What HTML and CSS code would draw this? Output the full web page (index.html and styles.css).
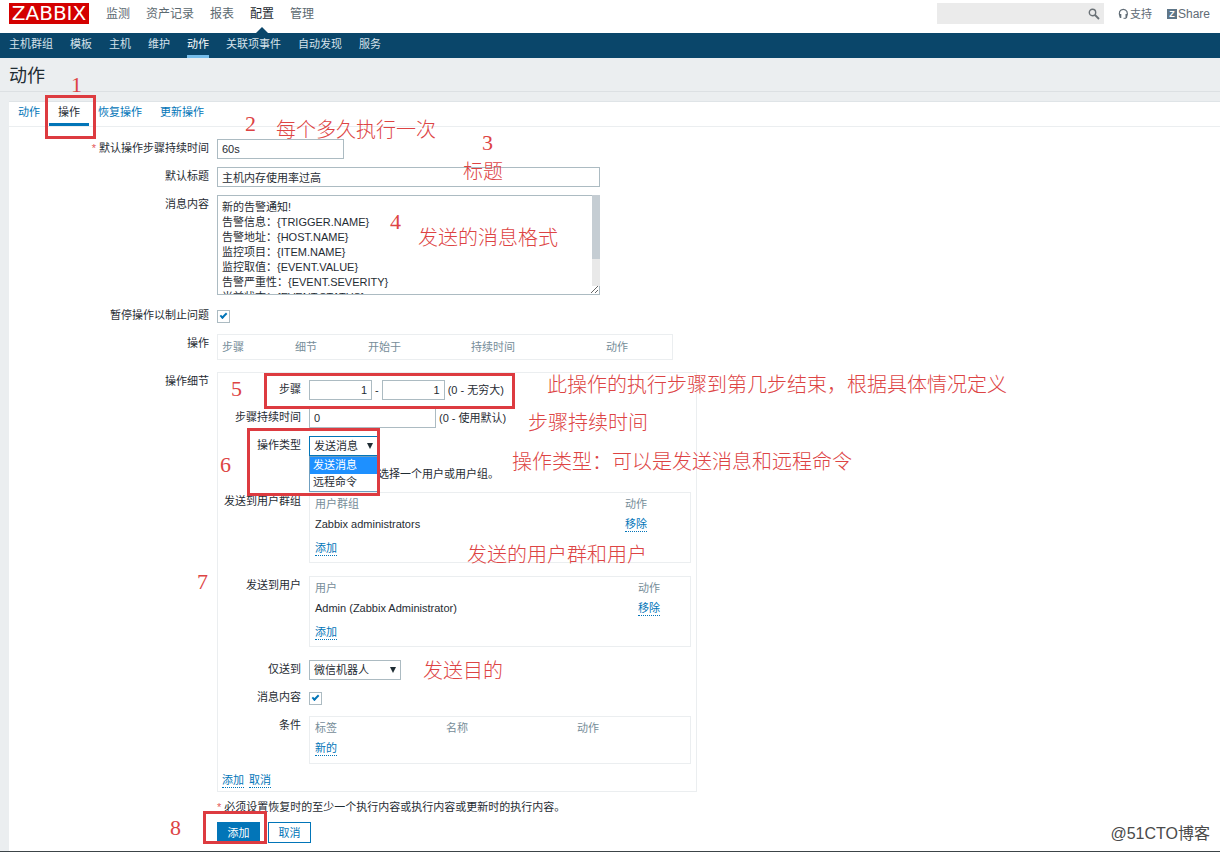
FILE: index.html
```html
<!DOCTYPE html>
<html lang="zh-CN">
<head>
  <meta charset="UTF-8" />
  <meta name="viewport" content="width=device-width, initial-scale=1.0" />
  <title>动作</title>
  <link rel="stylesheet" href="styles.css">
</head>
<body>

  <header class="top">
    <a class="logo" href="#">ZABBIX</a>
    <nav class="menu">
      <a href="#">监测</a>
      <a href="#">资产记录</a>
      <a href="#">报表</a>
      <a href="#" class="selected">配置</a>
      <a href="#">管理</a>
    </nav>
    <div class="search">
      <input type="text" aria-label="搜索" />
      <button type="button" aria-label="搜索">
        <svg width="12" height="12" viewBox="0 0 12 12" fill="none" stroke="#6a7176">
          <circle cx="4.5" cy="4.5" r="3.2" stroke-width="1.4" />
          <path d="M7 7l4 4" stroke-width="1.8" />
        </svg>
      </button>
    </div>
    <a class="tool support" href="#">
      <svg width="11" height="12" viewBox="0 0 11 12" fill="none" stroke="#5f6b75">
        <path d="M2.2 8.6C.2 5 1.8 1.3 5.3 1.3S10.4 5 8.6 8.6" stroke-width="1.2" />
        <path d="M2.5 6v4M8.3 6v4" stroke-width="1.6" />
        <path d="M8.3 10.3H5.5" stroke-width="1" />
      </svg>
      支持
    </a>
    <a class="tool" href="#"><span class="z-mark">Z</span>Share</a>
  </header>

  <nav class="submenu">
    <a href="#">主机群组</a>
    <a href="#">模板</a>
    <a href="#">主机</a>
    <a href="#">维护</a>
    <a href="#" class="selected">动作</a>
    <a href="#">关联项事件</a>
    <a href="#">自动发现</a>
    <a href="#">服务</a>
  </nav>

  <h1>动作</h1>

  <main>
    <div class="tabs">
      <a href="#">动作</a>
      <a href="#" class="selected">操作</a>
      <a href="#">恢复操作</a>
      <a href="#">更新操作</a>
    </div>

    <form>
      <div class="row">
        <label class="required" for="period">默认操作步骤持续时间</label>
        <input type="text" id="period" class="medium" value="60s" />
      </div>
      <div class="row">
        <label for="subject">默认标题</label>
        <input type="text" id="subject" class="wide" value="主机内存使用率过高" />
      </div>
      <div class="row row-message">
        <label for="message">消息内容</label>
        <div class="message">
          <textarea id="message" class="wide">新的告警通知!
告警信息：{TRIGGER.NAME}
告警地址：{HOST.NAME}
监控项目：{ITEM.NAME}
监控取值：{EVENT.VALUE}
告警严重性：{EVENT.SEVERITY}
当前状态：{EVENT.STATUS}</textarea>
          <div class="scroll"></div>
        </div>
      </div>
      <div class="row">
        <label for="pause">暂停操作以制止问题</label>
        <div class="field"><input type="checkbox" id="pause" checked /></div>
      </div>
      <div class="row row-table">
        <span class="label">操作</span>
        <table class="operations">
          <tr><th>步骤</th><th>细节</th><th>开始于</th><th>持续时间</th><th>动作</th></tr>
        </table>
      </div>

      <div class="row">
        <span class="label">操作细节</span>
        <div class="details">
          <div class="row">
            <label for="stepFrom">步骤</label>
            <div class="field">
              <input type="text" id="stepFrom" class="small" value="1" />
              <span>-</span>
              <input type="text" class="small" aria-label="结束步骤" value="1" />
              <span>(0 - 无穷大)</span>
            </div>
          </div>
          <div class="row">
            <label for="stepPeriod">步骤持续时间</label>
            <div class="field">
              <input type="text" id="stepPeriod" class="medium" value="0" />
              <span>(0 - 使用默认)</span>
            </div>
          </div>
          <div class="row">
            <label for="opType">操作类型</label>
            <div class="select select-type">
              <select id="opType">
                <option>发送消息</option>
                <option>远程命令</option>
              </select>
              <ul class="options">
                <li class="active">发送消息</li>
                <li>远程命令</li>
              </ul>
            </div>
          </div>
          <div class="row">
            <span class="label"></span>
            <div class="field hint">选择一个用户或用户组。</div>
          </div>
          <div class="row row-list">
            <span class="label">发送到用户群组</span>
            <table class="list groups">
              <tr><th>用户群组</th><th>动作</th></tr>
              <tr><td>Zabbix administrators</td><td><a href="#">移除</a></td></tr>
              <tr class="add"><td colspan="2"><a href="#">添加</a></td></tr>
            </table>
          </div>
          <div class="row row-list">
            <span class="label">发送到用户</span>
            <table class="list users">
              <tr><th>用户</th><th>动作</th></tr>
              <tr><td>Admin (Zabbix Administrator)</td><td><a href="#">移除</a></td></tr>
              <tr class="add"><td colspan="2"><a href="#">添加</a></td></tr>
            </table>
          </div>
          <div class="row">
            <label for="media">仅送到</label>
            <div class="select select-media">
              <select id="media">
                <option>微信机器人</option>
              </select>
            </div>
          </div>
          <div class="row">
            <label for="defaultMsg">消息内容</label>
            <div class="field"><input type="checkbox" id="defaultMsg" checked /></div>
          </div>
          <div class="row">
            <span class="label">条件</span>
            <table class="list conditions">
              <tr><th>标签</th><th>名称</th><th>动作</th></tr>
              <tr><td colspan="3"><a href="#">新的</a></td></tr>
            </table>
          </div>
          <div class="links">
            <a href="#">添加</a>
            <a href="#">取消</a>
          </div>
        </div>
      </div>

      <p class="footnote required">必须设置恢复时的至少一个执行内容或执行内容或更新时的执行内容。</p>
      <div class="buttons">
        <button type="button" class="primary">添加</button>
        <button type="button">取消</button>
      </div>
    </form>
  </main>

  <!-- Tutorial notes laid over the form -->
  <div class="notes">
    <div class="frame frame-tab"></div>
    <div class="frame frame-steps"></div>
    <div class="frame frame-type"></div>
    <div class="frame frame-add"></div>

    <span class="num n1">1</span>
    <span class="num n2">2</span>
    <span class="num n3">3</span>
    <span class="num n4">4</span>
    <span class="num n5">5</span>
    <span class="num n6">6</span>
    <span class="num n7">7</span>
    <span class="num n8">8</span>

    <span class="note t-period">每个多久执行一次</span>
    <span class="note t-subject">标题</span>
    <span class="note t-message">发送的消息格式</span>
    <span class="note t-steps">此操作的执行步骤到第几步结束，根据具体情况定义</span>
    <span class="note t-duration">步骤持续时间</span>
    <span class="note t-type">操作类型：可以是发送消息和远程命令</span>
    <span class="note t-users">发送的用户群和用户</span>
    <span class="note t-target">发送目的</span>
    <span class="watermark">@51CTO博客</span>
  </div>

</body>
</html>
```
FILE: styles.css
```css
* {
  box-sizing: border-box;
}

body {
  position: relative;
  margin: 0;
  min-height: 100vh;
  display: flex;
  flex-direction: column;
  background: #ebeef0;
  border-bottom: 1px solid #3c4448;
  font-family: "Liberation Sans", Arial, "Noto Sans CJK SC", sans-serif;
  font-size: 11px;
  line-height: 18px;
  color: #1f2c33;
}

a {
  color: #0275b8;
  text-decoration: none;
}

input, select, textarea, button {
  font: inherit;
  color: inherit;
  border-radius: 0;
}

/* Header */
.top {
  display: flex;
  align-items: center;
  height: 33px;
  padding: 0 10px 6px 9px;
  background: #fff;
}

.logo {
  width: 80px;
  height: 21px;
  background: #d40000;
  color: #fff;
  font-family: "DejaVu Sans", sans-serif;
  font-size: 20px;
  line-height: 21px;
  text-align: center;
}

.menu {
  display: flex;
  gap: 16px;
  margin-left: 17px;
  font-size: 12px;
}

.menu a {
  position: relative;
  color: #5c6970;
}

.menu .selected {
  color: #1f2c33;
}

.menu .selected::after {
  content: "";
  position: absolute;
  left: 5px;
  top: 22px;
  border: 7px solid transparent;
  border-top: 0;
  border-bottom-color: #0a466a;
}

.search {
  display: flex;
  width: 167px;
  height: 21px;
  margin-left: auto;
  background: #ebebeb;
}

.search input {
  flex: 1;
  min-width: 0;
}

.search button {
  display: flex;
  align-items: center;
  padding: 0 4px;
  border: 0;
  background: none;
}

.tool {
  display: flex;
  align-items: center;
  gap: 1px;
  margin-left: 15px;
  font-size: 12px;
  color: #5f6b75;
}

.support {
  margin-left: 14px;
  font-size: 11px;
}

.z-mark {
  width: 10px;
  height: 10px;
  background: #5f7688;
  color: #fff;
  font-size: 9px;
  font-weight: bold;
  line-height: 10px;
  text-align: center;
}

.submenu {
  display: flex;
  gap: 17px;
  height: 25px;
  padding: 0 9px;
  background: #0a466a;
}

.submenu a {
  padding-top: 2px;
  color: #d5e2ea;
}

.submenu .selected {
  color: #fff;
  border-bottom: 3px solid #76bdea;
}

h1 {
  margin: 0 0 9px;
  padding: 6px 9px 3px;
  border-bottom: 1px solid #dce0e3;
  font-size: 18px;
  font-weight: normal;
  line-height: 24px;
}

/* Form */
main {
  flex: 1;
  margin-left: 9px;
  padding-bottom: 7px;
  background: #fff;
  border-top: 1px solid #dfe4e7;
}

.tabs {
  display: flex;
  height: 25px;
  border-bottom: 1px solid #ebeef0;
}

.tabs a {
  padding: 1px 9px 0;
}

.tabs .selected {
  color: #1f2c33;
  border-bottom: 3px solid #0275b8;
}

form {
  padding-top: 12px;
}

.row {
  display: flex;
  align-items: flex-start;
  gap: 8px;
  margin-bottom: 8px;
}

.row > label,
.row > .label {
  flex: none;
  width: 200px;
  text-align: right;
}

.required::before {
  content: "* ";
  color: #e45959;
}

.field {
  display: flex;
  align-items: center;
  gap: 3px;
  min-height: 20px;
}

input[type="text"], textarea {
  padding: 0 4px;
  background: #fff;
  border: 1px solid #acbbc2;
}

.row input[type="text"] {
  height: 20px;
}

.search input[type="text"] {
  background: none;
  border: 0;
}

.wide {
  width: 383px;
}

.medium {
  width: 127px;
}

.small {
  width: 63px;
  text-align: right;
}

.row-message {
  margin-bottom: 11px;
}

.message {
  position: relative;
  display: flex;
}

textarea {
  height: 100px;
  padding: 4px;
  line-height: 15px;
  overflow: hidden;
}

.scroll {
  position: absolute;
  top: 0;
  right: 0;
  width: 8px;
  height: 91px;
  background: #e9e9e9;
  border-top: 64px solid #c5cdd3;
}

input[type="checkbox"] {
  appearance: none;
  position: relative;
  width: 13px;
  height: 13px;
  margin: 0;
  background: #fff;
  border: 1px solid #acbbc2;
}

input[type="checkbox"]:checked::after {
  content: "";
  position: absolute;
  left: 2px;
  top: 2px;
  width: 5px;
  height: 2px;
  border: 2px solid #0275b8;
  border-width: 0 0 2px 2px;
  transform: rotate(-45deg);
}

table {
  border-collapse: separate;
  border-spacing: 0;
  border: 1px solid #ebeef0;
  table-layout: fixed;
}

th, td {
  padding: 0 5px;
  text-align: left;
  font-weight: normal;
}

th {
  color: #768d99;
}

td a, .links a {
  display: inline-block;
  line-height: 14px;
  border-bottom: 1px dotted #0275b8;
}

.row-table {
  margin-bottom: 12px;
}

.operations {
  width: 456px;
  height: 26px;
}

.operations th {
  padding: 0 4px;
}

.operations th:nth-child(-n+2) {
  width: 73px;
}

.operations th:nth-child(3) {
  width: 103px;
}

.operations th:nth-child(4) {
  width: 135px;
}

.details {
  width: 480px;
  padding: 7px 5px 2px 0;
  border: 1px solid #ebeef0;
}

.details .row > label,
.details .row > .label {
  width: 83px;
}

.select {
  position: relative;
  height: 20px;
}

.select select {
  appearance: none;
  width: 100%;
  height: 20px;
  padding: 0 4px;
  background: #fff;
  border: 1px solid #acbbc2;
}

.select::after {
  content: "";
  position: absolute;
  right: 5px;
  top: 7px;
  border: 3px solid transparent;
  border-top: 6px solid #1f2c33;
  border-bottom: 0;
}

.select-type {
  width: 69px;
}

.select-type select {
  border-color: #0275b8;
}

.select-media {
  width: 92px;
}

.options {
  position: absolute;
  top: 20px;
  left: 0;
  right: 0;
  margin: 0;
  padding: 0;
  background: #fff;
  border: 1px solid #6f9fc0;
  list-style: none;
  line-height: 17px;
}

.options li {
  padding: 0 3px;
}

.options .active {
  background: #1e90ff;
  color: #fff;
}

.hint {
  padding-left: 69px;
}

.row-list {
  margin-bottom: 13px;
}

.list {
  width: 382px;
  padding-top: 1px;
}

.list th, .list td {
  height: 20px;
}

.groups th:first-child {
  width: 310px;
}

.users th:first-child {
  width: 323px;
}

.conditions {
  padding-bottom: 5px;
}

.conditions th:nth-child(-n+2) {
  width: 131px;
}

.list .add td {
  height: 28px;
}

.links {
  display: flex;
  gap: 5px;
  padding: 1px 4px;
}

.footnote {
  margin: 0 0 8px;
  padding-left: 208px;
  line-height: 14px;
}

.buttons {
  display: flex;
  gap: 8px;
  padding-left: 208px;
}

.buttons button {
  width: 43px;
  height: 21px;
  padding: 0;
  background: #fff;
  border: 1px solid #0275b8;
  color: #0275b8;
}

.buttons .primary {
  background: #0275b8;
  color: #fff;
}

/* Notes */
.notes {
  position: absolute;
  inset: 0;
  pointer-events: none;
  color: #dd4444;
}

.frame, .num, .note, .watermark {
  position: absolute;
  white-space: nowrap;
}

.frame {
  border: 3px solid #dd3b40;
}

.frame-tab { left: 45px; top: 95px; width: 51px; height: 44px; }
.frame-steps { left: 264px; top: 373px; width: 251px; height: 36px; }
.frame-type { left: 247px; top: 428px; width: 133px; height: 68px; }
.frame-add { left: 203px; top: 811px; width: 64px; height: 33px; }

.num {
  font-family: "Liberation Serif", serif;
  font-size: 22px;
  line-height: 24px;
}

.n1 { left: 71px; top: 73px; }
.n2 { left: 245px; top: 112px; }
.n3 { left: 482px; top: 131px; }
.n4 { left: 390px; top: 210px; }
.n5 { left: 231px; top: 377px; }
.n6 { left: 220px; top: 453px; }
.n7 { left: 197px; top: 570px; }
.n8 { left: 170px; top: 816px; }

.note {
  font-size: 20px;
  font-weight: 300;
  line-height: 24px;
}

.t-period { left: 276px; top: 118px; }
.t-subject { left: 463px; top: 160px; }
.t-message { left: 418px; top: 226px; }
.t-steps { left: 547px; top: 373px; }
.t-duration { left: 528px; top: 411px; }
.t-type { left: 512px; top: 450px; }
.t-users { left: 467px; top: 543px; }
.t-target { left: 423px; top: 659px; }

.watermark {
  right: 10px;
  bottom: 5px;
  font-size: 16px;
  line-height: 24px;
  color: #4a4a4a;
}
```
